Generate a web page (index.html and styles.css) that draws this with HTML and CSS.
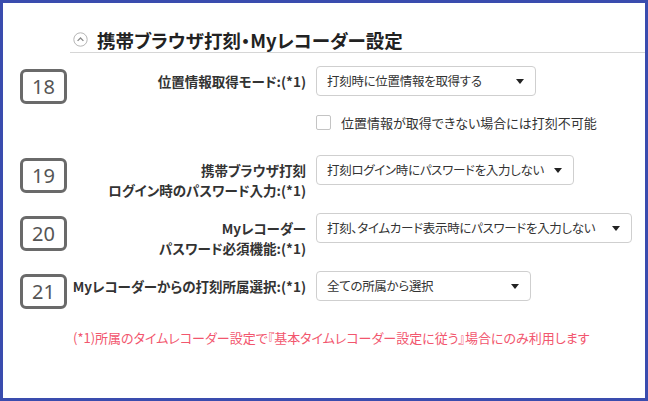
FILE: index.html
```html
<!DOCTYPE html>
<html lang="ja">
<head>
  <meta charset="UTF-8" />
  <meta name="viewport" content="width=device-width, initial-scale=1.0"/>
  <title>携帯ブラウザ打刻・Myレコーダー設定</title>
  <link rel="stylesheet" href="styles.css">
</head>
<body>
  <div class="frame">
    <section class="panel">
      <h2 class="panel-title">
        <span class="toggle">
          <svg width="15" height="15" viewBox="0 0 15 15">
            <circle cx="7.5" cy="7.5" r="6.7" fill="none" stroke="#b5b5b5" stroke-width="1"/>
            <path d="M4.6 8.9 L7.5 6 L10.4 8.9" fill="none" stroke="#8a8a8a" stroke-width="1.3"/>
          </svg>
        </span>
        携帯ブラウザ打刻・Myレコーダー設定
      </h2>

      <div class="row">
        <span class="no">18</span>
        <div class="name">位置情報取得モード:(*1)</div>
        <div class="field">
          <div class="select w-mode">打刻時に位置情報を取得する</div>
          <label class="check"><span class="box"></span>位置情報が取得できない場合には打刻不可能</label>
        </div>
      </div>

      <div class="row">
        <span class="no">19</span>
        <div class="name">携帯ブラウザ打刻<br>ログイン時のパスワード入力:(*1)</div>
        <div class="field">
          <div class="select w-login">打刻ログイン時にパスワードを入力しない</div>
        </div>
      </div>

      <div class="row">
        <span class="no">20</span>
        <div class="name">Myレコーダー<br>パスワード必須機能:(*1)</div>
        <div class="field">
          <div class="select w-pass">打刻、タイムカード表示時にパスワードを入力しない</div>
        </div>
      </div>

      <div class="row">
        <span class="no">21</span>
        <div class="name">Myレコーダーからの打刻所属選択:(*1)</div>
        <div class="field">
          <div class="select w-dept">全ての所属から選択</div>
        </div>
      </div>

      <p class="note">(*1)所属のタイムレコーダー設定で『基本タイムレコーダー設定に従う』場合にのみ利用します</p>
    </section>
  </div>
</body>
</html>
```

FILE: styles.css
```css
body {
  margin: 0;
  font-family: "Noto Sans CJK JP", "Noto Sans", sans-serif;
  font-feature-settings: "palt";
  color: #333;
  background-color: #fff;
}

.frame {
  box-sizing: border-box;
  width: 648px;
  height: 401px;
  border: 3px solid #3a4cae;
}

.panel {
  padding-top: 24px;
}

.panel-title {
  display: flex;
  align-items: center;
  gap: 9px;
  margin: 0 0 13px 67px;
  padding-left: 3px;
  height: 25px;
  font-size: 18.5px;
  font-weight: bold;
  color: #222;
  border-bottom: 1px solid #d6d6d6;
  line-height: 24px;
}

.toggle {
  display: flex;
}

.row {
  display: flex;
  align-items: flex-start;
  padding-left: 17px;
  margin-bottom: 13px;
}

.no {
  box-sizing: border-box;
  flex-shrink: 0;
  width: 47px;
  height: 35px;
  margin-top: 3px;
  border: 3px solid #6a6a6a;
  border-radius: 6px;
  display: flex;
  align-items: center;
  justify-content: center;
  font-family: "Noto Sans", sans-serif;
  font-size: 20px;
  color: #555;
}

.name {
  width: 239px;
  padding-top: 5px;
  text-align: right;
  font-size: 13.5px;
  font-weight: bold;
  line-height: 20px;
  color: #333;
  white-space: nowrap;
}

.field {
  margin-left: 10px;
  display: flex;
  flex-direction: column;
}

.select {
  box-sizing: border-box;
  position: relative;
  height: 30px;
  padding: 0 24px 0 10px;
  border: 1px solid #cfcfcf;
  border-radius: 4px;
  font-size: 12.5px;
  letter-spacing: -0.3px;
  line-height: 28px;
  color: #333;
  white-space: nowrap;
}

/* dropdown caret */
.select::after {
  content: "";
  position: absolute;
  right: 11px;
  top: 12px;
  border-left: 4px solid transparent;
  border-right: 4px solid transparent;
  border-top: 5px solid #222;
}

.w-mode { width: 220px; }
.w-login { width: 258px; }
.w-pass { width: 316px; }
.w-dept { width: 215px; }

.check {
  display: flex;
  align-items: center;
  gap: 10px;
  margin: 19px 0 12px;
  font-size: 13px;
  line-height: 15px;
  color: #333;
}

.check .box {
  box-sizing: border-box;
  width: 15px;
  height: 15px;
  border: 1px solid #c4c4c4;
  border-radius: 2px;
  background-color: #fff;
}

.note {
  margin: 19px 0 0 70px;
  font-size: 13px;
  color: #f2566e;
}
```
